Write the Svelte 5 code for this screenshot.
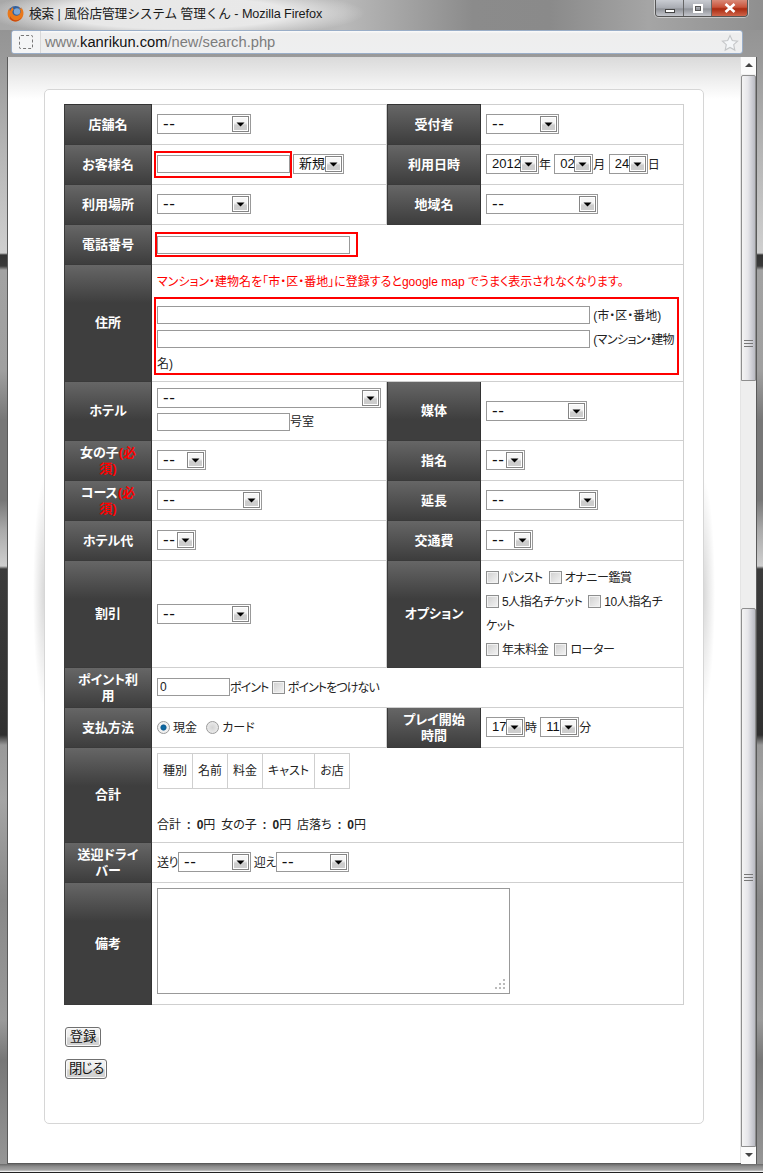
<script>
  const selectClass = 'sel';
</script>

{#snippet sel(width, text = '--')}
  <select class="{selectClass} {width}" class:num={text !== '--'}><option>{text}</option></select>
{/snippet}

<div class="window">
  <header class="titlebar">
    <svg class="fx" width="17" height="17" viewBox="0 0 17 17" aria-hidden="true">
      <circle cx="8.500" cy="8.500" r="7.500" fill="#2f5f9e" />
      <circle cx="10" cy="6.500" r="3.200" fill="#7fa8d4" />
      <path d="M14.300 2.400c1.700 2 2.500 4.300 2.100 6.800-.6 4.200-4.100 7.300-8 7.300C3.800 16.500.6 13 .6 8.800c0-2 .6-3.800 1.700-5.200 0 1 .3 1.900.9 2.500.3-1.800 1.400-3.300 3-4.200-.4 1.100-.1 2 .8 2.700-1.300.9-1.700 2-1.500 3.200.4 1.900 2.300 3.200 4.400 2.900 2.300-.3 3.800-2.200 3.700-4.400-.1-1.700-.9-3-2.200-3.900 1.300.2 2.400.9 3.100 1.900 0-.9-.3-1.700-1.200-2.500z" fill="#e9781a" />
      <path d="M3 11c1 2.500 3.200 4.300 6 4.300 2.500 0 4.800-1.400 5.900-3.700-.9 3-3.500 4.900-6.500 4.900-2.200 0-4.300-1.100-5.400-3z" fill="#c9480f" />
    </svg>
    <span class="wintitle">検索 | 風俗店管理システム 管理くん - Mozilla Firefox</span>
    <div class="winbtns">
      <span class="wb min"><i></i></span>
      <span class="wb max"><i></i></span>
      <span class="wb close">
        <svg width="14" height="10" viewBox="0 0 14 10" aria-hidden="true"><path d="M2.500 1l9 8M11.500 1l-9 8" stroke="#fff" stroke-width="2.600" fill="none" /></svg>
      </span>
    </div>
  </header>

  <div class="urlbar">
    <span class="identity"><i></i></span>
    <span class="url">www.<b>kanrikun.com</b>/new/search.php</span>
    <svg class="star" width="18" height="18" viewBox="0 0 18 18" aria-hidden="true">
      <path d="M9 1.500l2.300 5 5.300.6-3.900 3.600 1.100 5.400L9 13.400l-4.800 2.700 1.100-5.400L1.400 7.100l5.300-.6z" fill="#f4f6f8" stroke="#c4c6c8" stroke-width="1.100" />
    </svg>
  </div>

  <div class="client">
    <main class="page">
      <section class="card">
        <table class="form">
          <colgroup><col class="c1" /><col class="c2" /><col class="c3" /><col class="c4" /></colgroup>
          <tbody>
            <tr class="first">
              <th>店舗名</th><td>{@render sel('s94')}</td>
              <th>受付者</th><td>{@render sel('s73')}</td>
            </tr>
            <tr>
              <th>お客様名</th>
              <td><span class="red namebox"><input type="text" class="i133" /></span>{@render sel('s51 after', '新規')}</td>
              <th>利用日時</th>
              <td>{@render sel('s53', '2012')}年 {@render sel('s39', '02')}月 {@render sel('s39', '24')}日</td>
            </tr>
            <tr>
              <th>利用場所</th><td>{@render sel('s94')}</td>
              <th>地域名</th><td>{@render sel('s112')}</td>
            </tr>
            <tr>
              <th>電話番号</th>
              <td colspan="3"><span class="red telbox"><input type="text" class="i193" /></span></td>
            </tr>
            <tr class="r117">
              <th>住所</th>
              <td colspan="3" class="addr">
                <p class="note">マンション・建物名を「市・区・番地」に登録するとgoogle map でうまく表示されなくなります。</p>
                <div class="red addrbox">
                  <input type="text" class="i433" /> (市・区・番地)<br />
                  <input type="text" class="i433" /> <span class="narrow">(マンション・建物</span><br />名)
                </div>
              </td>
            </tr>
            <tr class="r59">
              <th>ホテル</th>
              <td class="hotel">
                {@render sel('s224')}
                <div class="room"><input type="text" class="i133" />号室</div>
              </td>
              <th>媒体</th><td>{@render sel('s101')}</td>
            </tr>
            <tr>
              <th>女の子<em>(必<br />須)</em></th><td>{@render sel('s49')}</td>
              <th>指名</th><td>{@render sel('s39')}</td>
            </tr>
            <tr>
              <th>コース<em>(必<br />須)</em></th><td>{@render sel('s105')}</td>
              <th>延長</th><td>{@render sel('s112')}</td>
            </tr>
            <tr>
              <th>ホテル代</th><td>{@render sel('s39')}</td>
              <th>交通費</th><td>{@render sel('s47')}</td>
            </tr>
            <tr class="r107">
              <th>割引</th><td>{@render sel('s94')}</td>
              <th>オプション</th>
              <td class="opts">
                <input type="checkbox" />パンスト <input type="checkbox" class="next" />オナニー鑑賞<br />
                <input type="checkbox" />5人指名チケット <input type="checkbox" class="next" />10人指名チ<br />ケット<br />
                <input type="checkbox" />年末料金 <input type="checkbox" class="next" />ローター
              </td>
            </tr>
            <tr>
              <th>ポイント利<br />用</th>
              <td colspan="3"><input type="text" class="i73" value="0" /><span class="tight">ポイント</span> <input type="checkbox" /><span class="tight">ポイントをつけない</span></td>
            </tr>
            <tr>
              <th>支払方法</th>
              <td><input type="radio" name="pay" checked />現金 <input type="radio" name="pay" class="next" />カード</td>
              <th>プレイ開始<br />時間</th>
              <td>{@render sel('s39', '17')}時 {@render sel('s39', '11')}分</td>
            </tr>
            <tr class="r95">
              <th>合計</th>
              <td colspan="3" class="total">
                <table class="mini">
                  <tbody><tr><td>種別</td><td>名前</td><td>料金</td><td>キャスト</td><td>お店</td></tr></tbody>
                </table>
                <p class="sum">合計 <b>: 0</b>円 女の子 <b>: 0</b>円 店落ち <b>: 0</b>円</p>
              </td>
            </tr>
            <tr>
              <th>送迎ドライ<br />バー</th>
              <td colspan="3" class="drv">送り{@render sel('s73')} 迎え{@render sel('s73')}</td>
            </tr>
            <tr class="r122">
              <th>備考</th>
              <td colspan="3" class="memo"><textarea></textarea></td>
            </tr>
          </tbody>
        </table>
        <div class="actions">
          <button type="button" class="save">登録</button>
          <button type="button" class="shut">閉じる</button>
        </div>
      </section>
    </main>

    <aside class="scrollbar">
      <span class="arrow up"></span>
      <span class="thumb t1"><i></i></span>
      <span class="track"></span>
      <span class="thumb t2"><i></i></span>
      <span class="arrow down"></span>
    </aside>
  </div>
  <div class="bottom"></div>
</div>

<style>
  :global(body) {
    margin: 0;
    background: #999;
  }
  * {
    box-sizing: border-box;
  }
  .window {
    width: 763px;
    height: 1173px;
    overflow: hidden;
    display: flex;
    flex-direction: column;
    font-family: "Liberation Sans", "Noto Sans CJK JP", sans-serif;
    font-size: 12px;
    color: #222;
    font-feature-settings: "palt";
    background: linear-gradient(180deg,
      #8e8e8e 0, #9a9a9a 60px, #b5b5b5 150px, #cfcfcf 253px,
      #333 255px, #3a3a3a 266px, #a2a2a2 270px, #a0a0a0 370px,
      #777 420px, #777 500px, #aaa 530px, #cfcfcf 566px,
      #3b3b3b 569px, #333 700px, #2f2f2f 735px, #999 745px, #a5a5a5 800px,
      #888 900px, #9a9a9a 1020px, #777 1060px, #999 1173px);
  }

  .titlebar {
    height: 30px;
    flex: none;
    position: relative;
    display: flex;
    align-items: flex-start;
    padding: 5px 0 0 7px;
    background:
      radial-gradient(ellipse 190px 26px at 175px 13px, rgba(235, 235, 235, .95) 60%, rgba(235, 235, 235, 0) 100%),
      linear-gradient(90deg, #a8a8a8 0, #b9b9b9 45%, #8b8b8b 62%, #8a8a8a 72%, #a5a5a5 85%, #8f8f8f 100%);
  }
  .fx {
    flex: none;
  }
  .wintitle {
    margin: 1px 0 0 5px;
    color: #1a1a1a;
    font-size: 12.700px;
    line-height: 16px;
    white-space: nowrap;
    font-feature-settings: normal;
    letter-spacing: -.1px;
  }
  .winbtns {
    position: absolute;
    top: 0;
    left: 655px;
    display: flex;
    height: 17px;
    border: 1px solid #555;
    border-top: 0;
    border-radius: 0 0 4px 4px;
    overflow: hidden;
    box-shadow: 0 0 0 1px rgba(255, 255, 255, .45);
  }
  .wb {
    display: flex;
    align-items: center;
    justify-content: center;
    height: 100%;
    width: 28px;
    background: linear-gradient(#c9ccd2, #a8abb2 50%, #8f9298 55%, #c4c6cc);
    border-right: 1px solid #666;
  }
  .wb i {
    display: block;
  }
  .min i {
    width: 10px;
    height: 4px;
    margin-top: 5px;
    background: #fff;
    border: 1px solid #444;
  }
  .max i {
    width: 10px;
    height: 9px;
    background: transparent;
    border: 2px solid #fff;
    outline: 1px solid #555;
    outline-offset: -3px;
  }
  .close {
    width: 35px;
    border-right: 0;
    background: linear-gradient(#d98a78, #c9533a 45%, #a92a10 55%, #d0654a);
  }

  .urlbar {
    height: 24px;
    flex: none;
    margin: 0 20px 0 11px;
    display: flex;
    align-items: center;
    position: relative;
    background: linear-gradient(#fbfbfb, #eeeeee 12%, #eeeff0);
    border: 1px solid #9aaec8;
    border-radius: 3px;
  }
  .identity {
    width: 29px;
    height: 100%;
    flex: none;
    display: flex;
    align-items: center;
    justify-content: center;
    border-right: 1px solid #d8d8d8;
    background: #f4f5f6;
    border-radius: 3px 0 0 3px;
  }
  .identity i {
    display: block;
    width: 14px;
    height: 14px;
    border: 1px dashed #777;
    border-radius: 2px;
  }
  .url {
    margin-left: 4px;
    font-size: 14.700px;
    color: #7c7c7c;
    white-space: nowrap;
    font-family: "Liberation Sans", sans-serif;
  }
  .url b {
    font-weight: 400;
    color: #111;
  }
  .star {
    position: absolute;
    right: 3px;
    top: 3px;
  }

  .client {
    flex: 1;
    min-height: 0;
    margin: 3px 6px 0 7px;
    display: flex;
    border: 1px solid #5a5a5a;
    border-top: 0;
    background: #fff;
  }
  .page {
    flex: 1;
    min-width: 0;
    padding: 32px 36px 0;
    background: linear-gradient(#dadada, #ffffff 42px) no-repeat;
    isolation: isolate;
  }
  .card {
    position: relative;
    height: 1035px;
    padding: 14px 19px 0;
    background: #fff;
    border: 1px solid #d6d6d6;
    border-radius: 5px;
  }
  .card::before {
    content: "";
    position: absolute;
    z-index: -1;
    left: -12px;
    right: -12px;
    top: 388px;
    height: 230px;
    background:
      radial-gradient(ellipse 12px 115px at 12px 50%, rgba(0, 0, 0, .16), rgba(0, 0, 0, 0)),
      radial-gradient(ellipse 12px 115px at calc(100% - 12px) 50%, rgba(0, 0, 0, .16), rgba(0, 0, 0, 0));
  }

  .form {
    width: 620px;
    table-layout: fixed;
    border-collapse: separate;
    border-spacing: 0;
  }
  .c1 { width: 88px; }
  .c2 { width: 235px; }
  .c3 { width: 94px; }
  .c4 { width: 203px; }

  .form > tbody > tr { height: 40px; }
  .form > tbody > tr.first { height: 41px; }
  .form > tbody > tr.r117 { height: 117px; }
  .form > tbody > tr.r59 { height: 59px; }
  .form > tbody > tr.r107 { height: 107px; }
  .form > tbody > tr.r95 { height: 95px; }
  .form > tbody > tr.r122 { height: 122px; }

  .form > tbody > tr > th {
    padding: 0 4px;
    font-size: 13px;
    font-weight: 700;
    line-height: 16px;
    color: #fff;
    text-align: center;
    background: #3e3e3e linear-gradient(#666666, #3e3e3e) no-repeat;
    background-size: 100% 38px;
    border-left: 1px solid #3a3a3a;
    border-right: 1px solid #333;
    border-bottom: 1px solid #3a3a3a;
  }
  .form > tbody > tr > th em {
    font-style: normal;
    color: #f00;
  }
  .form > tbody > tr > td {
    padding: 0 5px;
    line-height: 24px;
    vertical-align: middle;
    border-bottom: 1px solid #cfcfcf;
    border-right: 1px solid #cfcfcf;
  }
  .form > tbody > tr.first > td {
    border-top: 1px solid #cfcfcf;
  }
  .form > tbody > tr.first > th {
    border-top: 1px solid #333;
  }

  select,
  input,
  textarea,
  button {
    font-family: inherit;
    margin: 0;
  }
  .sel {
    appearance: none;
    -webkit-appearance: none;
    height: 20px;
    margin-top: -2px;
    padding: 0 0 0 5px;
    border: 1px solid #999;
    border-radius: 0;
    font-size: 17px;
    line-height: 18px;
    color: #111;
    letter-spacing: .6px;
    vertical-align: middle;
    background: #fff url("data:image/svg+xml,%3Csvg xmlns='http://www.w3.org/2000/svg' width='17' height='16'%3E%3ClinearGradient id='g' x1='0' y1='0' x2='0' y2='1'%3E%3Cstop offset='.4' stop-color='%23f6f6f6'/%3E%3Cstop offset='.6' stop-color='%23cdcdcd'/%3E%3C/linearGradient%3E%3Crect x='.5' y='.5' width='16' height='15' fill='%23fff' stroke='%23858585'/%3E%3Crect x='2' y='2' width='13' height='12' fill='url(%23g)'/%3E%3Cpath d='M4.500 6.500h8l-4 4z' fill='%23000'/%3E%3C/svg%3E") no-repeat right 1px center;
  }
  .num {
    font-size: 13px;
    letter-spacing: 0;
  }
  .after {
    margin-left: 1px;
  }
  .s39 { width: 39px; }
  .s47 { width: 47px; }
  .s49 { width: 49px; }
  .s51 { width: 51px; }
  .s53 { width: 53px; }
  .s73 { width: 73px; }
  .s94 { width: 94px; }
  .s101 { width: 101px; }
  .s105 { width: 105px; }
  .s112 { width: 112px; }
  .s224 { width: 224px; }

  input[type="text"] {
    height: 18px;
    margin-top: -2px;
    padding: 0 2px;
    border: 1px solid #999;
    border-radius: 0;
    font-size: 12px;
    color: #222;
    vertical-align: middle;
    background: #fff;
    outline: 0;
  }
  .i73 { width: 73px; }
  .i133 { width: 133px; }
  .i193 { width: 193px; }
  .i433 { width: 433px; }

  .red {
    border: 2px solid #f00;
  }
  .namebox {
    display: inline-block;
    width: 138px;
    height: 27px;
    margin-left: -3px;
    padding: 2px 0 0 1px;
    vertical-align: middle;
  }
  .telbox {
    display: inline-block;
    width: 203px;
    height: 25px;
    margin-left: -2px;
    padding: 2px 0 0;
    vertical-align: middle;
  }
  .namebox input,
  .telbox input {
    display: block;
    margin-top: 0;
  }
  .form > tbody > tr > td.addr {
    padding: 5px 4px 0 5px;
    vertical-align: top;
  }
  .note {
    margin: 0;
    color: #f00;
    line-height: 24px;
  }
  .addrbox {
    width: 525px;
    height: 78px;
    margin: 3px 0 0 -3px;
    padding: 5px 0 0 1px;
    line-height: 24px;
    overflow: hidden;
    white-space: nowrap;
  }
  .addrbox input[type="text"] {
    margin-top: -3px;
    margin-bottom: 1px;
  }
  .narrow {
    letter-spacing: -.6px;
  }
  .form > tbody > tr > td.hotel {
    padding-top: 6px;
    line-height: 18px;
    vertical-align: top;
  }
  .hotel .sel {
    display: block;
    margin-top: 0;
  }
  .room {
    margin-top: 5px;
  }
  .room input[type="text"] {
    margin-top: 0;
    vertical-align: top;
  }

  input[type="checkbox"] {
    appearance: none;
    -webkit-appearance: none;
    width: 13px;
    height: 13px;
    margin: 0 3px 0 0;
    vertical-align: -2px;
    border: 1px solid #8e8f8f;
    box-shadow: inset 0 0 0 1px #f2f2f2;
    background: linear-gradient(135deg, #cfcfcf, #f4f4f4);
  }
  .form > tbody > tr > td.opts {
    padding-right: 0;
    letter-spacing: -.4px;
  }
  input[type="checkbox"].next {
    margin-left: 3px;
  }
  .tight {
    letter-spacing: -.9px;
  }
  .drv {
    letter-spacing: -.5px;
  }
  input[type="radio"] {
    appearance: none;
    -webkit-appearance: none;
    width: 13px;
    height: 13px;
    margin: 0 3px 0 0;
    vertical-align: -2px;
    border: 1px solid #9a9a9a;
    border-radius: 50%;
    background: radial-gradient(circle at 50% 50%, #d4d4d4, #f2f2f2);
  }
  input[type="radio"].next {
    margin-left: 6px;
  }
  input[type="radio"]:checked {
    background: radial-gradient(circle at 50% 50%, #0a6ea8 0, #0f5d94 34%, #f0f0f0 44%);
    outline: 0;
  }

  .form > tbody > tr > td.total {
    padding-top: 5px;
    padding-bottom: 5px;
    vertical-align: top;
  }
  .mini {
    border-collapse: collapse;
    table-layout: fixed;
    width: 192px;
    height: 36px;
  }
  .mini td {
    width: 35px;
    padding: 0;
    text-align: center;
    border: 1px solid #cfcfcf;
    white-space: nowrap;
    line-height: 16px;
  }
  .mini td:nth-child(4) {
    width: 52px;
  }
  .sum {
    margin: 24px 0 0;
    line-height: 24px;
    word-spacing: 2.500px;
  }
  .sum b {
    font-weight: 700;
  }

  .form > tbody > tr > td.memo {
    padding-top: 5px;
    vertical-align: top;
  }
  textarea {
    display: block;
    width: 353px;
    height: 106px;
    resize: none;
    border: 1px solid #999;
    border-radius: 0;
    outline: 0;
    background: #fff url("data:image/svg+xml,%3Csvg xmlns='http://www.w3.org/2000/svg' width='11' height='11' fill='%23bbb'%3E%3Crect x='8' width='2' height='2'/%3E%3Crect x='4' y='4' width='2' height='2'/%3E%3Crect x='8' y='4' width='2' height='2'/%3E%3Crect y='8' width='2' height='2'/%3E%3Crect x='4' y='8' width='2' height='2'/%3E%3Crect x='8' y='8' width='2' height='2'/%3E%3C/svg%3E") no-repeat right 3px bottom 3px;
  }

  .actions {
    display: flex;
    flex-direction: column;
    align-items: flex-start;
    gap: 12px;
    margin: 22px 0 0 1px;
  }
  button {
    height: 20px;
    padding: 0;
    font-size: 13.300px;
    line-height: 16px;
    color: #111;
    border: 1px solid #707070;
    border-radius: 3px;
    background: linear-gradient(#f4f4f4, #ececec 50%, #d6d6d6 55%, #cfcfcf);
    box-shadow: inset 0 0 0 1px #fafafa;
  }
  .save {
    width: 36px;
  }
  .shut {
    width: 42px;
    letter-spacing: -2px;
  }

  .scrollbar {
    width: 16px;
    flex: none;
    display: flex;
    flex-direction: column;
    background: #f0f0f0;
    border-left: 1px solid #e4e4e4;
  }
  .arrow {
    height: 17px;
    flex: none;
    position: relative;
    background: #fbfbfb;
  }
  .arrow::after {
    content: "";
    position: absolute;
    left: 4px;
    top: 6px;
    border: 4px solid transparent;
  }
  .up::after {
    border-bottom: 4px solid #444;
    border-top: 0;
  }
  .down::after {
    border-top: 4px solid #444;
    border-bottom: 0;
  }
  .thumb {
    position: relative;
    flex: none;
    border: 1px solid #8e8e8e;
    border-radius: 2px 2px 0 0;
    background: linear-gradient(90deg, #f4f4f4, #e6e6ea 45%, #b9bac2);
  }
  .thumb i {
    position: absolute;
    left: 2px;
    right: 2px;
    height: 7px;
    border-top: 1px solid #777;
    border-bottom: 1px solid #777;
    background: linear-gradient(transparent 2px, #777 2px, #777 3px, transparent 3px);
  }
  .t1 {
    height: 306px;
    margin-top: 1px;
  }
  .t1 i {
    top: 264px;
  }
  .t2 {
    height: 539px;
  }
  .t2 i {
    top: 265px;
  }
  .track {
    height: 227px;
    flex: none;
    background: #eeeeee;
  }

  .bottom {
    height: 9px;
    flex: none;
    background: linear-gradient(#6a6a6a, #8e8e8e 30%, #a5a5a5 70%, #f0f0f0 78%, #f0f0f0 88%, #222 90%);
  }
</style>
